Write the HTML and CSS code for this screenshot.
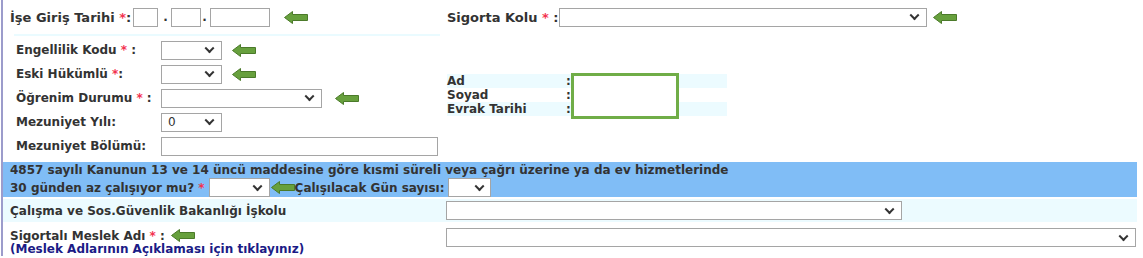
FILE: index.html
```html
<!doctype html>
<html lang="tr">
<head>
  <meta charset="utf-8">
  <title>Sigortalı İşe Giriş</title>
  <link rel="stylesheet" href="styles.css">
</head>
<body>
  <div class="form">
    <div class="top">
      <div class="left">
        <div class="date-row">
          <label>İşe Giriş Tarihi <span class="req">*</span>:</label>
          <input type="text" class="day">
          <span class="dot">.</span>
          <input type="text" class="month">
          <span class="dot dot2">.</span>
          <input type="text" class="year">
          <svg class="arrow a-date" viewBox="0 0 24 13"><path d="M0.5 6.5 L8.5 0.5 V3.5 H23.5 V9.5 H8.5 V12.5 Z"/></svg>
        </div>
        <div class="sub">
          <div class="sub-row">
            <label>Engellilik Kodu <span class="req">*</span> :</label>
            <span class="sel"><select class="w-small"></select></span>
            <svg class="arrow" viewBox="0 0 24 13"><path d="M0.5 6.5 L8.5 0.5 V3.5 H23.5 V9.5 H8.5 V12.5 Z"/></svg>
          </div>
          <div class="sub-row">
            <label>Eski Hükümlü <span class="req">*</span>:</label>
            <span class="sel"><select class="w-small"></select></span>
            <svg class="arrow" viewBox="0 0 24 13"><path d="M0.5 6.5 L8.5 0.5 V3.5 H23.5 V9.5 H8.5 V12.5 Z"/></svg>
          </div>
          <div class="sub-row">
            <label>Öğrenim Durumu <span class="req">*</span> :</label>
            <span class="sel"><select class="w-mid"></select></span>
            <svg class="arrow a-wide" viewBox="0 0 24 13"><path d="M0.5 6.5 L8.5 0.5 V3.5 H23.5 V9.5 H8.5 V12.5 Z"/></svg>
          </div>
          <div class="sub-row">
            <label>Mezuniyet Yılı:</label>
            <span class="sel"><select class="w-small"><option>0</option></select></span>
          </div>
          <div class="sub-row">
            <label>Mezuniyet Bölümü:</label>
            <input type="text" class="bolum">
          </div>
        </div>
      </div>
      <div class="right">
        <div class="kol-row">
          <label>Sigorta Kolu <span class="req">*</span> :</label>
          <span class="sel"><select class="w-kol"></select></span>
          <svg class="arrow a-kol" viewBox="0 0 24 13"><path d="M0.5 6.5 L8.5 0.5 V3.5 H23.5 V9.5 H8.5 V12.5 Z"/></svg>
        </div>
        <div class="person">
          <div class="p-row alt"><span class="p-label">Ad</span><span>:</span></div>
          <div class="p-row"><span class="p-label">Soyad</span><span>:</span></div>
          <div class="p-row alt"><span class="p-label">Evrak Tarihi</span><span>:</span></div>
          <div class="photo"></div>
        </div>
      </div>
    </div>

    <div class="band">
      <div class="band-line">4857 sayılı Kanunun 13 ve 14 üncü maddesine göre kısmi süreli veya çağrı üzerine ya da ev hizmetlerinde</div>
      <div class="band-line band-ctl">
        <span>30 günden az çalışıyor mu? <span class="req">*</span></span>
        <span class="sel sel-az"><select class="w-small"></select></span>
        <svg class="arrow a-band" viewBox="0 0 24 13"><path d="M0.5 6.5 L8.5 0.5 V3.5 H23.5 V9.5 H8.5 V12.5 Z"/></svg>
        <span>Çalışılacak Gün sayısı:</span>
        <span class="sel sel-gun"><select class="w-gun"></select></span>
      </div>
    </div>

    <div class="line isk">
      <label>Çalışma ve Sos.Güvenlik Bakanlığı İşkolu</label>
      <span class="sel"><select class="w-isk"></select></span>
    </div>

    <div class="line meslek">
      <div class="m-label">
        <div>Sigortalı Meslek Adı <span class="req">*</span> :
          <svg class="arrow a-meslek" viewBox="0 0 24 13"><path d="M0.5 6.5 L8.5 0.5 V3.5 H23.5 V9.5 H8.5 V12.5 Z"/></svg>
        </div>
        <a class="help" href="#">(Meslek Adlarının Açıklaması için tıklayınız)</a>
      </div>
      <span class="sel"><select class="w-meslek"></select></span>
    </div>
  </div>
</body>
</html>
```

FILE: styles.css
```css
body {
  margin: 0;
  font: bold 12px "DejaVu Sans", Verdana, sans-serif;
  color: #333;
  background: #fff;
}
.form {
  margin-left: 1px;
  width: 1134px;
  border-left: 2px solid #9c9ccb;
}
.req {
  color: #f3324f;
}
input,
select {
  box-sizing: border-box;
  margin: 0;
  height: 19px;
  border: 1px solid #a5a5a5;
  background: #fff;
  font: 12px "DejaVu Sans", Verdana, sans-serif;
  color: #333;
  border-radius: 0;
}
select {
  -webkit-appearance: none;
  appearance: none;
  padding: 0 0 0 6px;
}
.sel {
  position: relative;
  display: inline-flex;
  justify-self: start;
}
.sel::after {
  content: "";
  position: absolute;
  right: 9px;
  top: 50%;
  width: 5px;
  height: 5px;
  border-right: 2px solid #333;
  border-bottom: 2px solid #333;
  transform: translateY(-75%) rotate(45deg);
  pointer-events: none;
}
.arrow {
  width: 24px;
  height: 13px;
  margin-left: 10px;
  flex: none;
}
.arrow path {
  fill: #67a03d;
  stroke: #4b7a2a;
  stroke-width: 1;
}

/* top block */
.top {
  display: grid;
  grid-template-columns: 444px 1fr;
}
.date-row {
  height: 34px;
  display: flex;
  align-items: center;
  padding-left: 7px;
}
.date-row label,
.kol-row label {
  font-size: 13px;
  white-space: nowrap;
}
.date-row label {
  margin-right: 2px;
}
.day { width: 25px; }
.month { width: 30px; }
.year { width: 60px; }
.dot {
  width: 4px;
  margin: 0 4px 0 5px;
}
.dot.dot2 {
  margin-left: 1px;
}
.a-date {
  margin-left: 14px;
}
.sub {
  margin-left: 11px;
  width: 426px;
  border-top: 2px solid #eafbff;
  padding: 2px 0 2px 2px;
  box-sizing: border-box;
}
.sub-row {
  display: grid;
  grid-template-columns: 145px auto auto 1fr;
  align-items: center;
  height: 24px;
}
.w-small { width: 61px; }
.w-mid { width: 161px; }
.bolum { width: 277px; }
.a-wide { margin-left: 13px; }

.kol-row {
  height: 34px;
  display: flex;
  align-items: center;
}
.kol-row label {
  flex: 0 0 108px;
}
.w-kol { width: 368px; }
.a-kol { margin-left: 6px; }

.person {
  position: relative;
  width: 280px;
  margin-top: 40px;
}
.p-row {
  display: flex;
  height: 14px;
  line-height: 14px;
}
.p-row.alt {
  background: #ecfbff;
}
.p-label {
  width: 119px;
}
.photo {
  position: absolute;
  left: 124px;
  top: -1px;
  width: 108px;
  height: 46px;
  box-sizing: border-box;
  border: 3px solid #70ad47;
  background: #fff;
}

/* bottom rows */
.band {
  margin-top: 2px;
  height: 35px;
  background: #80bdf6;
  padding-left: 7px;
}
.band-line {
  height: 16px;
  line-height: 16px;
}
.band-ctl {
  display: flex;
  align-items: center;
  height: 19px;
}
.sel-az { margin-left: 4px; }
.a-band { margin-left: 1px; margin-right: 0; }
.sel-gun { margin-left: 3px; }
.w-gun { width: 43px; }
.sel-gun::after { right: 8px; }

.line {
  display: grid;
  align-items: center;
  padding-left: 7px;
}
.isk {
  margin-top: 2px;
  height: 23px;
  background: #ecfbff;
  grid-template-columns: 436px auto;
}
.w-isk { width: 456px; }
.meslek {
  grid-template-columns: 436px auto;
  align-items: start;
  padding-top: 6px;
}
.m-label {
  line-height: 13px;
  padding-top: 1px;
}
.a-meslek {
  margin-left: 2px;
  vertical-align: -2px;
}
.help {
  color: #1b1b86;
  text-decoration: none;
}
.w-meslek { width: 690px; }
```
